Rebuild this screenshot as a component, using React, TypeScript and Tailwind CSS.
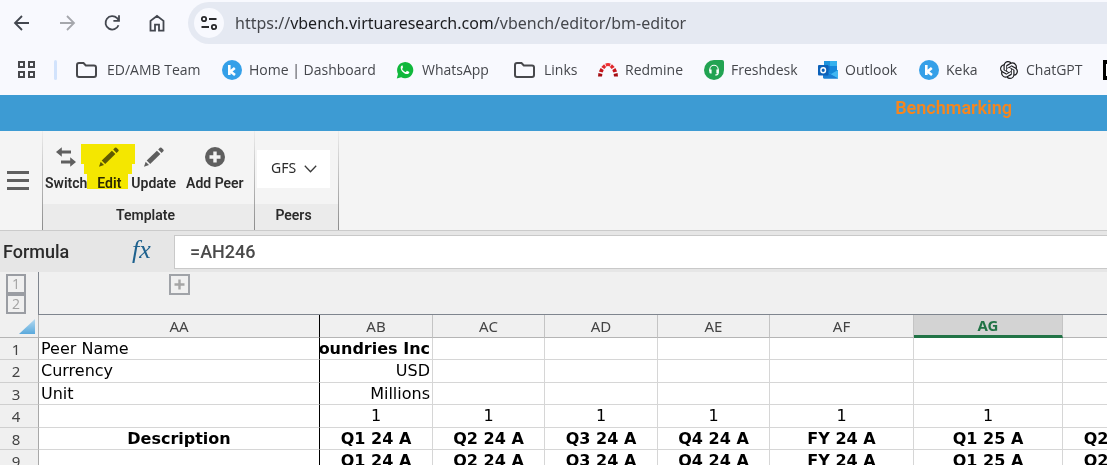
import React from "react";
import { SiOpenai } from "react-icons/si";

const chromeFont = "font-['Open_Sans','Noto_Sans',sans-serif]";

function Folder() {
  return (
    <svg width="21" height="16" viewBox="0 0 21 16" fill="none" stroke="#47484c" strokeWidth="2">
      <path d="M1 3a2 2 0 0 1 2-2h4.5l2.3 2.4H18a2 2 0 0 1 2 2V13a2 2 0 0 1-2 2H3a2 2 0 0 1-2-2z" />
    </svg>
  );
}

function KekaMark() {
  return (
    <svg width="20" height="20" viewBox="0 0 20 20">
      <circle cx="10" cy="10" r="10" fill="#35a0e8" />
      <path d="M7.3 5v10M12.8 8l-4.3 3.5L13 15" fill="none" stroke="#fff" strokeWidth="2.6" />
    </svg>
  );
}

function WhatsAppMark() {
  return (
    <svg width="18" height="18" viewBox="0 0 18 18">
      <path d="M.8 17.4 2 12.9A8.1 8.1 0 1 1 5.2 16.200z" fill="#10b83c" />
      <path
        d="M6.100 4.600c-.9.300-1.500 1.200-1.400 2.300.300 2.900 3.200 5.800 6.200 6.200 1.300.1 2.300-.6 2.400-1.800 0-.3 0-.4-.3-.6l-1.700-.8c-.3-.1-.5 0-.7.200l-.6.800c-.2.200-.4.200-.6.100-1.500-.6-2.600-1.700-3.300-3 0-.3.600-.7.800-1.300L6.800 4.900c-.2-.3-.4-.4-.7-.3z"
        fill="#fff"
      />
    </svg>
  );
}

function RedmineMark() {
  return (
    <svg width="20" height="15" viewBox="0 0 20 15">
      <path d="M0 14.500.4 11l4 .9-.4 2.600z" fill="#a50d12" />
      <path d="M.9 9.500 2.600 6l3.100 2.100-1 2.400z" fill="#c6151b" />
      <path d="M3.300 4.900 6.100 2.200l2 2.900L6.400 7z" fill="#e0262b" />
      <path d="M7.300 1.500Q10 .4 12.700 1.500l-.9 2.900q-1.800-.6-3.600 0z" fill="#ef2f33" />
      <path d="m13.900 2.200 2.800 2.700L13.600 7l-1.700-1.900z" fill="#e0262b" />
      <path d="M17.400 6l1.700 3.500-3.800 1-1-2.400z" fill="#c6151b" />
      <path d="m15.600 11.900 4-.9.400 3.500h-4z" fill="#a50d12" />
    </svg>
  );
}

function FreshdeskMark() {
  return (
    <svg width="20" height="20" viewBox="0 0 20 20">
      <path d="M10 0h8a2 2 0 0 1 2 2v8A10 10 0 1 1 10 0z" fill="#22a352" />
      <path d="M5.800 11V9.500a4.200 4.200 0 0 1 8.400 0V13q0 2-3 2" fill="none" stroke="#fff" strokeWidth="1.100" />
      <path d="M5.300 9.500h2.300v4H6.800q-1.500 0-1.500-1.500zM12.400 9.500h2.300V12q0 1.500-1.500 1.500h-.8z" fill="#fff" />
    </svg>
  );
}

function OutlookMark() {
  return (
    <svg width="20" height="18" viewBox="0 0 20 18">
      <path d="M6 0h13v11H6z" fill="#1477cf" />
      <path d="M12 0h7v5h-7z" fill="#35b1ee" />
      <path d="M6 0h6v5H6z" fill="#1d93dd" />
      <path d="M12 5h7v5h-7z" fill="#1687dc" />
      <path d="M5 9.500 20 9v8.500H6.500Q5 17.500 5 16z" fill="#1488d8" />
      <path d="m5 9 15 8.500V9l-7 4z" fill="#42b7f2" />
      <path d="m5 9 15 8.500H6.500Q5 17.500 5 16z" fill="#1a7fd4" />
      <rect y="4" width="10.500" height="10.500" rx="1" fill="#0c61b9" />
      <ellipse cx="5.200" cy="9.300" rx="2.300" ry="2.500" fill="none" stroke="#fff" strokeWidth="1.400" />
    </svg>
  );
}

function Pencil() {
  return (
    <svg width="20" height="20" viewBox="0 0 20 20" fill="#5f5f5f">
      <path d="M0 19.800 1.700 14.800 5 18z" />
      <path d="M2.700 13.500 12.900 3.700l3.500 3.400L6.200 17.100z" />
      <path d="m14.200 2.500 1.700-1.700q.8-.8 1.600 0l1.800 1.800q.8.800 0 1.600L17.600 5.900z" />
    </svg>
  );
}

function SwitchArrows() {
  return (
    <svg width="20" height="20" viewBox="0 0 20 20" fill="#5f5f5f">
      <path d="M0 5 5.800.200v3.300H15v3H5.800v3.300z" />
      <path d="m20 15-5.800-4.700v3.200H5v3h9.200v3.300z" />
    </svg>
  );
}

function AddCircle() {
  return (
    <svg width="20" height="20" viewBox="0 0 20 20">
      <circle cx="10" cy="10" r="10" fill="#5f5f5f" />
      <path d="M10 4.500v11M4.500 10h11" stroke="#f4f4f4" strokeWidth="3.400" />
    </svg>
  );
}

function NavButton({ label, className, children }: { label: string; className?: string; children: React.ReactNode }) {
  return (
    <button aria-label={label} className={`flex size-5 items-center justify-center ${className ?? ""}`}>
      <svg width="20" height="20" viewBox="0 0 20 20" fill="none" stroke="currentColor" strokeWidth="1.800">
        {children}
      </svg>
    </button>
  );
}

function Bookmark({ icon, label, className }: { icon: React.ReactNode; label: string; className: string }) {
  return (
    <a href="#" className={`flex shrink-0 items-center whitespace-nowrap ${className}`}>
      {icon}
      {label}
    </a>
  );
}

function Browser() {
  return (
    <header className={`shrink-0 overflow-hidden bg-[#f8f9fe] text-[#45474c] ${chromeFont}`}>
      <nav className="flex h-11 items-center pt-px pl-3">
        <div className="flex gap-[25px] text-[#43474f]">
          <NavButton label="Back">
            <path d="M17 10H3.500M10 3l-7 7 7 7" />
          </NavButton>
          <NavButton label="Forward" className="text-[#a5a7ac]">
            <path d="M3 10h13.500M10 3l7 7-7 7" />
          </NavButton>
          <NavButton label="Reload">
            <path d="M16.500 12.200a6.700 6.700 0 1 1-1.400-7L17 7.500M17 2.200v5.600h-5.600" />
          </NavButton>
          <NavButton label="Home">
            <path d="M3.500 17.600V7.900L10 3l6.500 4.900v9.700H12v-6H8v6z" />
          </NavButton>
        </div>
        <div className="ml-[21px] flex h-[42px] flex-1 items-center rounded-l-full bg-[#e5e9f2] pl-1.5">
          <button aria-label="Site information" className="flex size-[30px] items-center justify-center rounded-full bg-[#f8f9fe]">
            <svg width="16" height="16" viewBox="0 0 16 16" fill="none" stroke="#28292c" strokeWidth="1.800">
              <circle cx="3" cy="4" r="2.200" />
              <path d="M8 4h7.500M.5 12H8" />
              <circle cx="13" cy="12" r="2.200" />
            </svg>
          </button>
          <div className="ml-[11px] font-['Noto_Sans',sans-serif] text-base whitespace-nowrap">
            https://<span className="text-[#1c1d20]">vbench.virtuaresearch.com</span>/vbench/editor/bm-editor
          </div>
        </div>
      </nav>
      <nav className="flex h-[51px] items-center text-sm">
        <button aria-label="Apps" className="ml-[17px]">
          <svg width="19" height="19" viewBox="0 0 19 19" fill="none" stroke="#47484c" strokeWidth="2">
            <path d="M2 2h5v5H2zM12 2h5v5h-5zM2 12h5v5H2zM12 12h5v5h-5z" />
          </svg>
        </button>
        <span className="ml-[18px] h-5 w-[3px] shrink-0 rounded-full bg-[#d2e3fc]" />
        <Bookmark icon={<Folder />} label="ED/AMB Team" className="ml-[19px] w-[146px] gap-2.5" />
        <Bookmark icon={<KekaMark />} label="Home | Dashboard" className="w-[174px] gap-[7px]" />
        <Bookmark icon={<WhatsAppMark />} label="WhatsApp" className="w-[118px] gap-2" />
        <Bookmark icon={<Folder />} label="Links" className="w-[84px] gap-[9px]" />
        <Bookmark icon={<RedmineMark />} label="Redmine" className="w-[106px] gap-[7px]" />
        <Bookmark icon={<FreshdeskMark />} label="Freshdesk" className="w-[114px] gap-[7px]" />
        <Bookmark icon={<OutlookMark />} label="Outlook" className="w-[101px] gap-[7px]" />
        <Bookmark icon={<KekaMark />} label="Keka" className="w-[81px] gap-[7px]" />
        <Bookmark icon={<SiOpenai size={18} color="#1c1c1e" />} label="ChatGPT" className="w-[103px] gap-2" />
        <a href="#" aria-label="Bookmark" className="shrink-0">
          <svg width="20" height="20" viewBox="0 0 20 20">
            <path d="M0 0h20v20H0z" fill="#000" />
            <path d="M4 4v12" stroke="#fff" strokeWidth="2" />
          </svg>
        </a>
      </nav>
    </header>
  );
}

function Tool({ label, icon, highlighted }: { label: string; icon: React.ReactNode; highlighted?: boolean }) {
  return (
    <button className="relative flex shrink-0 flex-col items-center gap-2 whitespace-nowrap">
      {icon}
      <span className="leading-4">{label}</span>
      {highlighted && (
        <svg
          className="absolute top-[-3px] left-[-16px] max-w-none mix-blend-multiply"
          width="54"
          height="46"
          viewBox="0 0 54 46"
          fill="#fff200"
        >
          <path d="M0 0h54v20h-3v10h-4v15H6V30H3V20H0z" />
        </svg>
      )}
    </button>
  );
}

function Divider() {
  return <div className="w-px shrink-0 bg-linear-to-b from-[#ececec] to-[#8c8c8c]" />;
}

function Ribbon() {
  return (
    <section className="flex h-[99px] shrink-0 bg-[#f4f4f4] text-sm font-semibold text-[#2b2b2b]">
      <button aria-label="Menu" className="flex w-[42px] shrink-0 flex-col justify-center gap-[5px] pl-[7px]">
        <span className="h-[3px] w-[22px] bg-[#5f5f5f]" />
        <span className="h-[3px] w-[22px] bg-[#5f5f5f]" />
        <span className="h-[3px] w-[22px] bg-[#5f5f5f]" />
      </button>
      <Divider />
      <div className="flex w-[211px] shrink-0 flex-col">
        <div className="flex flex-1 items-start gap-2.5 pt-4 pl-0.5">
          <Tool label="Switch" icon={<SwitchArrows />} />
          <Tool label="Edit" icon={<Pencil />} highlighted />
          <Tool label="Update" icon={<Pencil />} />
          <Tool label="Add Peer" icon={<AddCircle />} />
        </div>
        <div className="h-[26px] bg-[#ebebeb] pr-1.5 text-center leading-[22px]">Template</div>
      </div>
      <Divider />
      <div className="flex w-[83px] shrink-0 flex-col">
        <div className="flex-1 pt-[19px] pl-0.5">
          <div className="relative w-[73px] bg-white">
            <select
              aria-label="Peers"
              className="h-[38px] w-full appearance-none bg-transparent pb-0.5 pl-3.5 font-['Noto_Sans',sans-serif] text-sm font-normal"
            >
              <option>GFS</option>
            </select>
            <svg
              className="pointer-events-none absolute top-[15px] left-[47px]"
              width="13"
              height="8"
              viewBox="0 0 13 8"
              fill="none"
              stroke="#3a3a3a"
              strokeWidth="1.300"
            >
              <path d="m.8.800 5.700 5.900L12.200.800" />
            </svg>
          </div>
        </div>
        <div className="h-[26px] bg-[#ebebeb] pr-1.5 text-center leading-[22px]">Peers</div>
      </div>
      <Divider />
    </section>
  );
}

function FormulaBar() {
  return (
    <section className="flex h-[42px] shrink-0 items-center border-t border-[#cbcbcb] bg-[#e6e6e6] pl-[3px] text-lg font-medium text-[#2b2b2b]">
      <label htmlFor="formula" className="w-[129px] shrink-0">
        Formula
      </label>
      <span className="w-[42px] shrink-0 pb-1 font-['Liberation_Serif',serif] text-[26px] leading-8 font-normal text-[#1f628e] italic">
        fx
      </span>
      <input
        id="formula"
        defaultValue="=AH246"
        className="h-[34px] min-w-0 flex-1 border border-r-0 border-[#c9c9c9] bg-white pl-[15px] text-[#4a4a4a] outline-none"
      />
    </section>
  );
}

const columns = [
  { name: "AA", width: "w-[281px]" },
  { name: "AB", width: "w-[113px]" },
  { name: "AC", width: "w-[112px]" },
  { name: "AD", width: "w-[113px]" },
  { name: "AE", width: "w-[112px]" },
  { name: "AF", width: "w-[144px]" },
  { name: "AG", width: "w-[149px]", active: true },
  { name: "AH", width: "w-[113px]" },
];

const periods = ["Q1 24 A", "Q2 24 A", "Q3 24 A", "Q4 24 A", "FY 24 A", "Q1 25 A", "Q2 25 A"];

type Row = { id: number; height: string; bold?: boolean; align: string; cells: string[] };

const rows: Row[] = [
  { id: 1, height: "h-[22px]", align: "justify-end", cells: ["Peer Name", "GlobalFoundries Inc"] },
  { id: 2, height: "h-[23px]", align: "justify-end", cells: ["Currency", "USD"] },
  { id: 3, height: "h-[22px]", align: "justify-end", cells: ["Unit", "Millions"] },
  { id: 4, height: "h-[23px]", align: "justify-center", cells: ["", "1", "1", "1", "1", "1", "1"] },
  { id: 8, height: "h-[22px]", align: "justify-center", bold: true, cells: ["Description", ...periods] },
  { id: 9, height: "h-[23px]", align: "justify-center", bold: true, cells: ["", ...periods] },
];

function Sheet() {
  return (
    <main className="min-h-0 flex-1 overflow-hidden bg-white">
      <div className="flex h-[43px] bg-[#f0f0f0] font-['Open_Sans','Noto_Sans',sans-serif] text-[#a2a2a2]">
        <div className="flex w-[38px] shrink-0 flex-col pt-0.5 pl-1.5">
          <button className="size-5 border-2 border-[#9a9da3] text-sm leading-4">1</button>
          <button className="size-5 border-2 border-[#9a9da3] text-sm leading-4">2</button>
        </div>
        <div className="flex-1 border-b border-l border-[#7f858e] pt-0.5 pl-[130px]">
          <button aria-label="Expand columns" className="flex size-[21px] items-center justify-center border-2 border-[#a0a3a8]">
            <svg width="11" height="11" viewBox="0 0 11 11" stroke="#a5a5a5" strokeWidth="2.400">
              <path d="M5.500.500v10M.5 5.500h10" />
            </svg>
          </button>
        </div>
      </div>
      <table className="w-[1176px] table-fixed border-separate border-spacing-0 font-['DejaVu_Sans',sans-serif] text-base text-black">
        <colgroup>
          <col className="w-[39px]" />
          {columns.map((c) => (
            <col key={c.name} className={c.width} />
          ))}
        </colgroup>
        <thead className="font-['Noto_Sans',sans-serif] text-[15px] text-[#444]">
          <tr>
            <td className="border-r border-b border-[#b5b5b5] bg-[#f0f0f0] p-0">
              <svg className="mr-[3px] ml-auto block" width="16" height="15" viewBox="0 0 16 15">
                <defs>
                  <linearGradient id="corner" x1="0" y1="0" x2="0" y2="1">
                    <stop offset="0" stopColor="#b5daf0" />
                    <stop offset="1" stopColor="#5aa9dc" />
                  </linearGradient>
                </defs>
                <path d="M16 0v15H0z" fill="url(#corner)" />
              </svg>
            </td>
            {columns.map((c, i) => (
              <th
                key={c.name}
                className={`h-[23px] border-r p-0 leading-5 ${
                  c.active
                    ? "border-b-3 border-b-[#217346] bg-[#d3d3d3] font-bold text-[#217346]"
                    : "border-b border-b-[#b5b5b5] bg-[#f0f0f0] font-normal"
                } ${i === 0 ? "border-r-black" : "border-r-[#c4c4c4]"}`}
              >
                {i < 7 ? c.name : ""}
              </th>
            ))}
          </tr>
        </thead>
        <tbody>
          {rows.map((row) => (
            <tr key={row.id}>
              <th className="border-r border-b border-r-[#a8a8a8] border-b-[#cfcfcf] bg-[#f0f0f0] p-0 pr-1.5 font-['Noto_Sans',sans-serif] text-[15px] leading-5 font-normal text-[#444]">
                {row.id}
              </th>
              {columns.map((c, i) => (
                <td
                  key={c.name}
                  className={`${row.height} border-r border-b border-b-[#d6d6d6] p-0 ${
                    i === 0 ? "border-r-black" : "border-r-[#d6d6d6]"
                  }`}
                >
                  <div
                    className={`flex overflow-hidden px-0.5 leading-5 whitespace-nowrap ${
                      i === 0 && !row.bold ? "justify-start" : row.align
                    } ${row.bold || (row.id === 1 && i === 1) ? "font-bold" : ""}`}
                  >
                    {row.cells[i] ?? ""}
                  </div>
                </td>
              ))}
            </tr>
          ))}
        </tbody>
      </table>
    </main>
  );
}

export default function App() {
  return (
    <div className="flex h-screen flex-col overflow-hidden bg-white font-[Roboto,sans-serif]">
      <Browser />
      <div className="flex h-9 shrink-0 justify-end bg-[#3d9bd3] pr-[95px]">
        <h1 className="text-lg leading-[26px] font-semibold text-[#f5861f]">Benchmarking</h1>
      </div>
      <Ribbon />
      <FormulaBar />
      <Sheet />
    </div>
  );
}
